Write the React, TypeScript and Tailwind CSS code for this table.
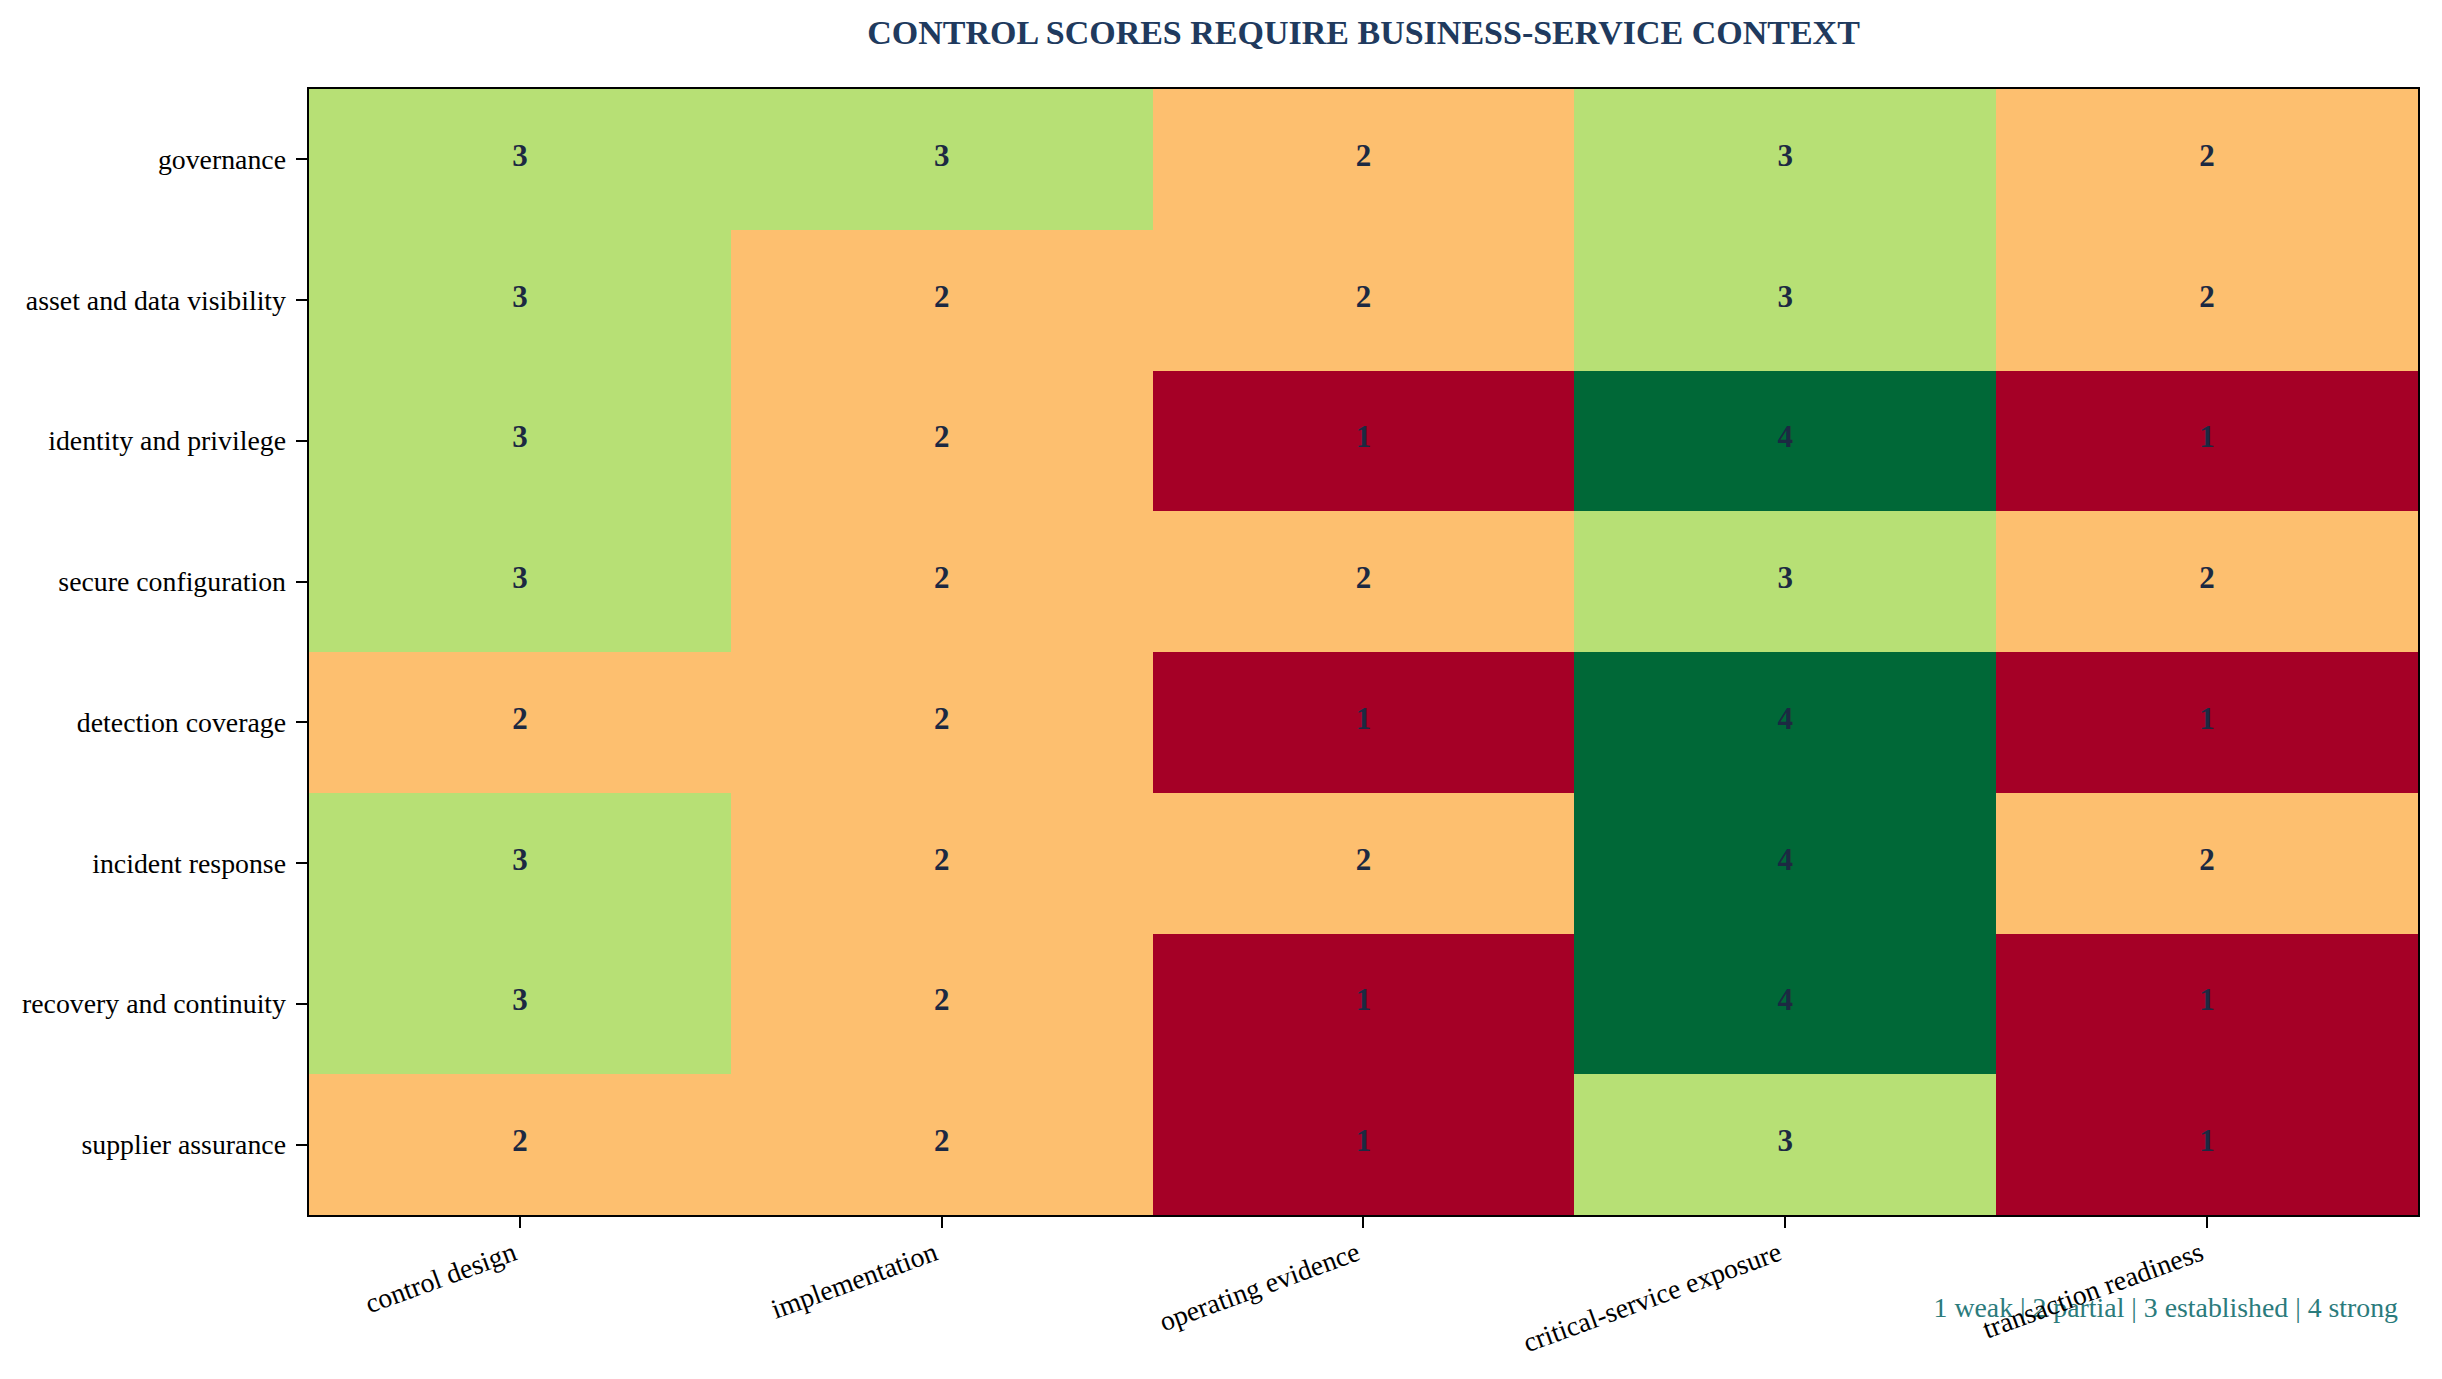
const ROWS = [
  'governance',
  'asset and data visibility',
  'identity and privilege',
  'secure configuration',
  'detection coverage',
  'incident response',
  'recovery and continuity',
  'supplier assurance',
]

const COLS = [
  'control design',
  'implementation',
  'operating evidence',
  'critical-service exposure',
  'transaction readiness',
]

const SCORES = [
  [3, 3, 2, 3, 2],
  [3, 2, 2, 3, 2],
  [3, 2, 1, 4, 1],
  [3, 2, 2, 3, 2],
  [2, 2, 1, 4, 1],
  [3, 2, 2, 4, 2],
  [3, 2, 1, 4, 1],
  [2, 2, 1, 3, 1],
]

const FILL: Record<number, string> = {
  1: 'bg-[#a50026]',
  2: 'bg-[#fdbf6f]',
  3: 'bg-[#b7e075]',
  4: 'bg-[#006837]',
}

export default function App() {
  return (
    <div className="w-[2442px] h-[1379px] overflow-hidden bg-white font-['Liberation_Serif','Times_New_Roman',serif] text-black">
      <div className="flex pt-[16px]">
        <div className="w-[307px] shrink-0" />
        <h1 className="w-[2113px] text-center text-[34px] leading-[33px] font-bold text-[#203a5e]">
          CONTROL SCORES REQUIRE BUSINESS-SERVICE CONTEXT
        </h1>
      </div>

      <div className="mt-[38px] flex">
        <div className="w-[307px] shrink-0 flex flex-col pt-[2px]">
          {ROWS.map((r) => (
            <div key={r} className="h-[140.75px] flex items-center justify-end">
              <span className="text-[27.8px] leading-[31px] whitespace-nowrap">{r}</span>
              <span className="ml-[10px] w-[11px] h-[2px] bg-black" />
            </div>
          ))}
        </div>

        <div className="w-[2113px] h-[1130px] shrink-0 border-2 border-black grid grid-cols-5 grid-rows-8">
          {SCORES.map((row, i) =>
            row.map((v, j) => (
              <div
                key={`${i}-${j}`}
                className={`${FILL[v]} flex items-center justify-center pb-[7px] text-[31px] leading-[34px] font-bold text-[#1c2942]`}
              >
                {v}
              </div>
            )),
          )}
        </div>
      </div>

      <div className="flex">
        <div className="w-[307px] shrink-0" />
        <div className="w-[2113px] shrink-0 grid grid-cols-5 px-[2px]">
          {COLS.map((c) => (
            <div key={c} className="flex flex-col items-center">
              <span className="w-[2px] h-[11px] bg-black" />
              <div className="w-full grid grid-cols-2 mt-[6px]">
                <div className="flex justify-end">
                  <span className="text-[27.8px] leading-[31px] whitespace-nowrap origin-bottom-right rotate-[-20deg]">
                    {c}
                  </span>
                </div>
                <div />
              </div>
            </div>
          ))}
        </div>
      </div>

      <div className="mt-[27px] flex justify-end pr-[44px]">
        <p className="text-[27.8px] leading-[31px] text-[#2b7b7c] whitespace-nowrap">
          1 weak | 2 partial | 3 established | 4 strong
        </p>
      </div>
    </div>
  )
}
